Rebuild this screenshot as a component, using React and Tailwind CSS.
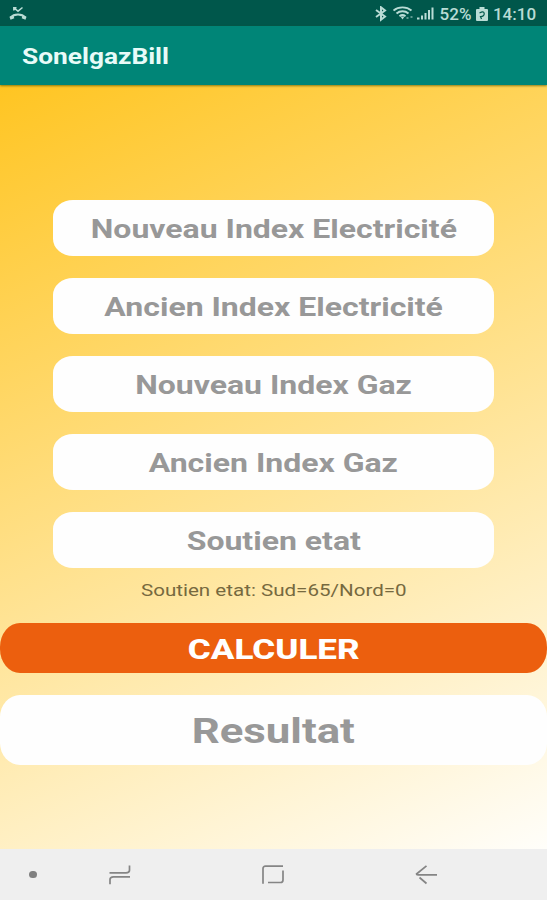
import React from 'react';

const fields = [
  { name: 'nouveauElec', label: 'Nouveau Index Electricité' },
  { name: 'ancienElec', label: 'Ancien Index Electricité' },
  { name: 'nouveauGaz', label: 'Nouveau Index Gaz' },
  { name: 'ancienGaz', label: 'Ancien Index Gaz' },
  { name: 'soutien', label: 'Soutien etat' },
];

function StatusBar() {
  return (
    <div className="h-[26px] bg-[#00574b] flex items-center justify-between pl-2 pr-[11px] pt-[2px] text-[#b9dcd5]">
      {/* missed call */}
      <svg className="w-5 h-4" viewBox="0 0 20 16" fill="none" stroke="currentColor">
        <path d="M5.500 1.500L10 5.200L14.500 1.500M5.800 4.500V1.800H8.500" strokeWidth="1.500" />
        <path d="M2.800 11.500C6 7.500 14 7.500 17.200 11.500" strokeWidth="2.200" />
        <path d="M2 12.200L5.800 10.800M18 12.200L14.200 10.800" strokeWidth="3.200" />
      </svg>

      <div className="flex items-center">
        <svg className="w-[13px] h-[16px]" viewBox="0 0 13 16" fill="none" stroke="currentColor" strokeWidth="2">
          <path d="M1 4L10 10.500L6 13.700V1.300L10 4.500L1 11" />
        </svg>
        <svg className="ml-[5px] w-[22px] h-4" viewBox="0 0 22 16" fill="none" stroke="currentColor" strokeWidth="1.900">
          <path d="M0.500 4.500C5.500 0.300 13.500 0.300 18.500 4.500" />
          <path d="M3.500 7.500C7 4.500 12 4.500 15.500 7.500" />
          <path d="M6.500 10.300C8.500 8.700 10.500 8.700 12.500 10.300" />
          <path d="M7.500 10.500L9.500 13.500L11.500 10.500Z" fill="currentColor" stroke="none" />
          <path d="M13.500 12h2M17.500 11h2" opacity="0.5" />
        </svg>
        <svg className="ml-[2px] w-[18px] h-4" viewBox="0 0 18 16" fill="currentColor">
          <path d="M0 11.500h2.500v2H0zM4 9.500h2v4H4zM7.500 7h2v6.500h-2zM11 4h2v9.500h-2zM14.500 1.500h2v12h-2z" />
        </svg>
        <span className="ml-[4px] w-[33px] flex justify-center text-[17px] font-medium leading-none whitespace-nowrap">52%</span>
        <svg className="ml-[4px] w-3 h-[15px]" viewBox="0 0 12 15">
          <path d="M3.500 0h5v2H11q1 0 1 1v10q0 1-1 1H1q-1 0-1-1V3q0-1 1-1h2.500z" fill="currentColor" />
          <path d="M3.500 6Q8 3.500 8.200 6.500T4.500 9.500L5.500 12" fill="none" stroke="#00574b" strokeWidth="1.200" />
        </svg>
        <span className="ml-[5px] w-[43px] flex justify-center text-[17px] font-medium leading-none whitespace-nowrap">14:10</span>
      </div>
    </div>
  );
}

function NavigationBar() {
  return (
    <nav className="h-[51px] bg-[#efefef] flex items-center text-[#858585]">
      <span className="ml-[29px] w-2 h-[7px] rounded-full bg-[#808080]" />
      <svg className="ml-[71px] w-6 h-5" viewBox="0 0 24 20" fill="none" stroke="currentColor" strokeWidth="1.700">
        <path d="M1.500 7.800H18Q21.500 7.800 21.500 5.200V0.500M22 11.800H5.500Q2 11.800 2 14.500V19.200" />
      </svg>
      <svg className="ml-[129px] w-6 h-5" viewBox="0 0 24 20" fill="none" stroke="currentColor" strokeWidth="1.700">
        <path d="M2 18.800V3.500Q2 1.200 4.500 1.200H22M22 5.500V15Q22 17.500 19.500 17.500H7" />
      </svg>
      <svg className="ml-[129px] w-6 h-5" viewBox="0 0 24 20" fill="none" stroke="currentColor" strokeWidth="1.700">
        <path d="M12.500 0.800L2.500 9Q2.500 9.900 4 9.900H23M5.500 12.500L12.500 18.500" />
      </svg>
    </nav>
  );
}

export default function App() {
  return (
    <div className="w-[547px] h-[900px] overflow-hidden flex flex-col font-[Roboto,sans-serif]">
      <StatusBar />
      <header className="relative h-[59px] bg-[#008577] flex items-center pl-[22px] pt-[2px] shadow-[0_1px_2px_rgba(90,90,0,0.7)]">
        <h1 className="origin-left scale-x-[1.195] text-[22px] font-bold text-[#e8fbf8] whitespace-nowrap">SonelgazBill</h1>
      </header>

      <main className="flex-1 flex flex-col items-center pt-[115px] bg-[linear-gradient(155deg,#ffc522_0%,#fffefa_100%)]">
        <div className="flex flex-col gap-[22px]">
          {fields.map((field) => (
            <div
              key={field.name}
              className="w-[441px] h-[56px] pt-[3px] rounded-[20px/17px] bg-[#fefefe] flex items-center justify-center"
            >
              <span className="scale-x-[1.23] text-[26px] font-bold text-[#989898] whitespace-nowrap">{field.label}</span>
            </div>
          ))}
        </div>

        <p className="mt-[11px] h-6 flex items-center scale-x-[1.21] text-[17px] text-[#76693f] whitespace-nowrap">
          Soutien etat: Sud=65/Nord=0
        </p>

        <button className="mt-[20px] w-full h-[50px] pt-[3px] rounded-[20px/24px] bg-[#ec5f0e] flex items-center justify-center">
          <span className="scale-x-[1.25] text-[28px] font-extrabold text-white">CALCULER</span>
        </button>
        <div className="mt-[22px] w-full h-[70px] pt-[5px] rounded-[20px/22px] bg-[#fefefe] flex items-center justify-center">
          <span className="scale-x-[1.25] text-[35px] font-bold text-[#989898]">Resultat</span>
        </div>
      </main>

      <NavigationBar />
    </div>
  );
}
